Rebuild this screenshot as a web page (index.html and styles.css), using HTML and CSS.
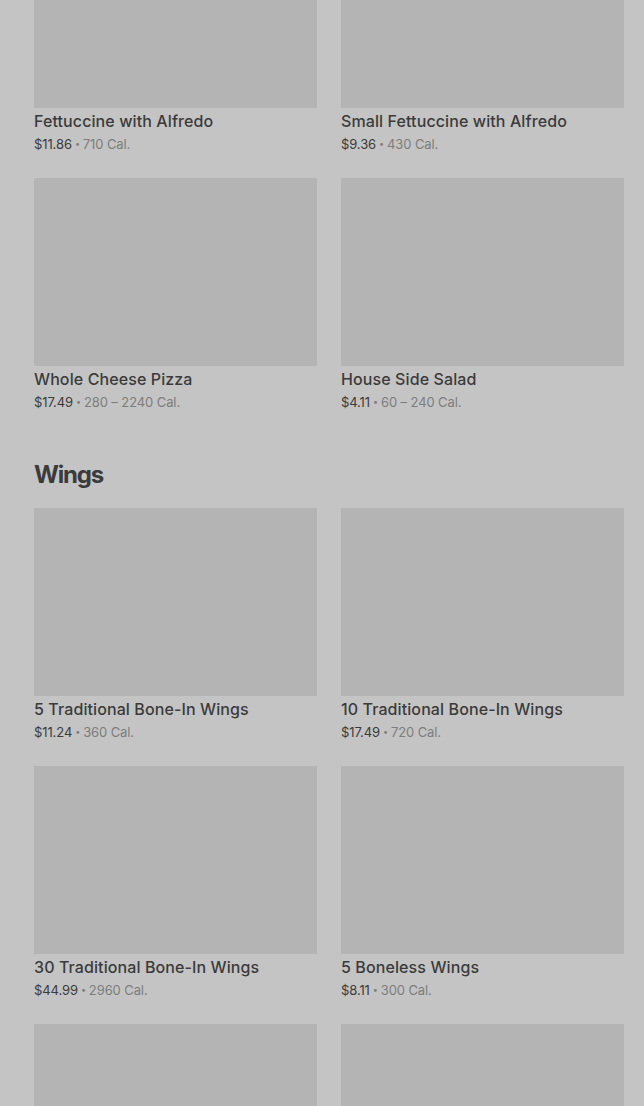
FILE: index.html
```html
<!DOCTYPE html>
<html>
<head>
<meta charset="utf-8">
<link rel="stylesheet" href="styles.css">
</head>
<body>
<div class="page">
  <section class="section first">
    <div class="grid">
      <div class="card top">
        <div class="img short"></div>
        <div class="title">Fettuccine with Alfredo</div>
        <div class="meta"><span class="price">$11.86</span><span class="dot">•</span><span class="cal">710 Cal.</span></div>
      </div>
      <div class="card top">
        <div class="img short"></div>
        <div class="title">Small Fettuccine with Alfredo</div>
        <div class="meta"><span class="price">$9.36</span><span class="dot">•</span><span class="cal">430 Cal.</span></div>
      </div>
      <div class="card">
        <div class="img"></div>
        <div class="title">Whole Cheese Pizza</div>
        <div class="meta"><span class="price">$17.49</span><span class="dot">•</span><span class="cal">280 – 2240 Cal.</span></div>
      </div>
      <div class="card">
        <div class="img"></div>
        <div class="title">House Side Salad</div>
        <div class="meta"><span class="price">$4.11</span><span class="dot">•</span><span class="cal">60 – 240 Cal.</span></div>
      </div>
    </div>
  </section>
  <section class="section">
    <h2 class="heading">Wings</h2>
    <div class="grid">
      <div class="card">
        <div class="img"></div>
        <div class="title">5 Traditional Bone-In Wings</div>
        <div class="meta"><span class="price">$11.24</span><span class="dot">•</span><span class="cal">360 Cal.</span></div>
      </div>
      <div class="card">
        <div class="img"></div>
        <div class="title">10 Traditional Bone-In Wings</div>
        <div class="meta"><span class="price">$17.49</span><span class="dot">•</span><span class="cal">720 Cal.</span></div>
      </div>
      <div class="card">
        <div class="img"></div>
        <div class="title">30 Traditional Bone-In Wings</div>
        <div class="meta"><span class="price">$44.99</span><span class="dot">•</span><span class="cal">2960 Cal.</span></div>
      </div>
      <div class="card">
        <div class="img"></div>
        <div class="title">5 Boneless Wings</div>
        <div class="meta"><span class="price">$8.11</span><span class="dot">•</span><span class="cal">300 Cal.</span></div>
      </div>
      <div class="card">
        <div class="img"></div>
      </div>
      <div class="card">
        <div class="img"></div>
      </div>
    </div>
  </section>
</div>
</body>
</html>
```
FILE: styles.css
```css
html, body {
  margin: 0;
  padding: 0;
  background: #c4c4c4;
  height: 1106px;
  overflow: hidden;
}
.page {
  padding: 0 20px 0 34px;
  font-family: "Inter", "Liberation Sans", sans-serif;
  color: #3a3a3a;
}
.grid {
  display: grid;
  grid-template-columns: 283px 283px;
  column-gap: 24px;
  row-gap: 24px;
}
.img {
  height: 188px;
  background: #b4b4b4;
}
.img.short {
  height: 108px;
}
.title {
  margin-top: 3px;
  height: 20px;
  font-size: 16px;
  line-height: 20px;
  font-weight: 500;
  color: #3b3b3b;
  letter-spacing: 0.1px;
}
.meta {
  margin-top: 3px;
  height: 20px;
  display: flex;
  align-items: center;
  font-size: 13px;
  line-height: 20px;
  letter-spacing: -0.1px;
}
.price {
  color: #3b3b3b;
}
.dot {
  color: #7d7d7d;
  margin: 0 3px;
  font-size: 9px;
}
.cal {
  color: #7d7d7d;
}
.section.first {
  padding-bottom: 47px;
}
.heading {
  margin: 0 0 17px;
  font-size: 24px;
  line-height: 32px;
  font-weight: 700;
  color: #3b3b3b;
  letter-spacing: -1.2px;
}
```
